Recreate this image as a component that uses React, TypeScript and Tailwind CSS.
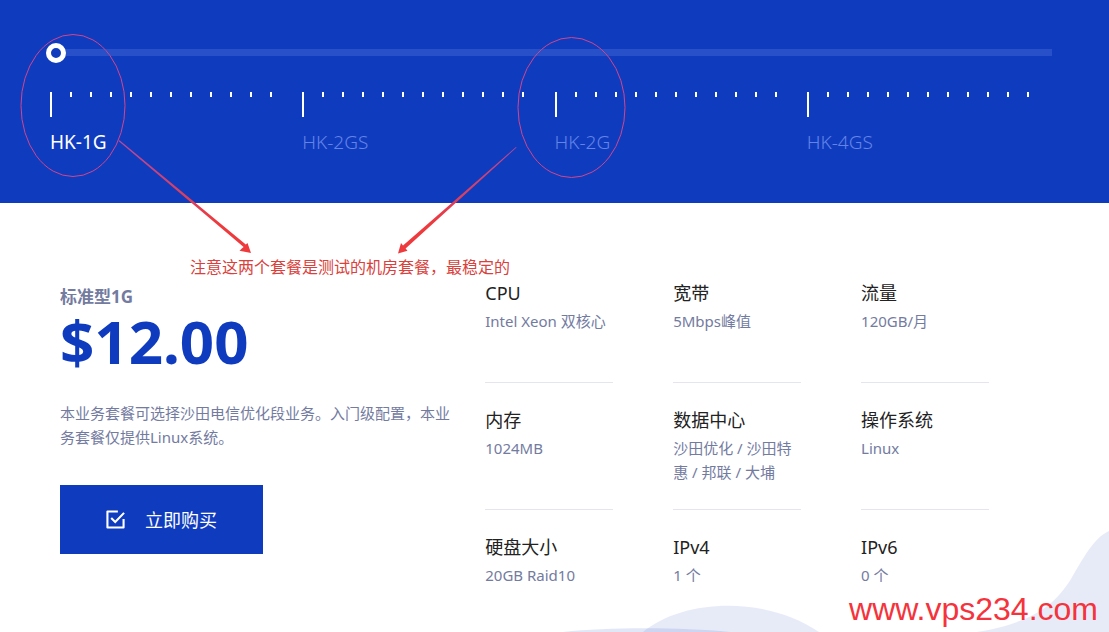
import { useState } from "react";

const plans = ["HK-1G", "HK-2GS", "HK-2G", "HK-4GS"];

const specs = [
  { title: "CPU", value: "Intel Xeon 双核心" },
  { title: "宽带", value: "5Mbps峰值" },
  { title: "流量", value: "120GB/月" },
  { title: "内存", value: "1024MB" },
  { title: "数据中心", value: "沙田优化 / 沙田特惠 / 邦联 / 大埔" },
  { title: "操作系统", value: "Linux" },
  { title: "硬盘大小", value: "20GB Raid10" },
  { title: "IPv4", value: "1 个" },
  { title: "IPv6", value: "0 个" },
];

function PlanSlider() {
  const [plan, setPlan] = useState(0);

  return (
    <header className="bg-[#0f3cbf] h-[203px] pt-[42px]">
      <div className="pl-[46px] pr-[57px]">
        <input
          type="range"
          aria-label="套餐"
          min={0}
          max={3}
          value={plan}
          onChange={(e) => setPlan(Number(e.target.value))}
          className="block w-full h-5 appearance-none bg-transparent cursor-pointer focus:outline-none [&::-webkit-slider-runnable-track]:h-[7px] [&::-webkit-slider-runnable-track]:bg-[#2850c8] [&::-webkit-slider-thumb]:appearance-none [&::-webkit-slider-thumb]:w-5 [&::-webkit-slider-thumb]:h-5 [&::-webkit-slider-thumb]:-mt-[6px] [&::-webkit-slider-thumb]:rounded-full [&::-webkit-slider-thumb]:border-5 [&::-webkit-slider-thumb]:border-white [&::-webkit-slider-thumb]:bg-[#0f3cbf]"
        />
      </div>
      <div className="grid grid-cols-4 px-[50px] mt-[30px]">
        {plans.map((name, i) => (
          <div key={name}>
            <div className="flex gap-[18px]">
              <span className="w-[2px] h-[25px] bg-white" />
              {Array.from({ length: 11 }, (_, n) => (
                <span key={n} className="w-[2px] h-[5px] bg-white" />
              ))}
            </div>
            <button
              type="button"
              onClick={() => setPlan(i)}
              className={
                i === plan
                  ? "block mt-[11px] text-[19px] leading-7 text-white"
                  : "block mt-[11px] text-[19px] leading-7 font-light text-[#6483e6]"
              }
            >
              {name}
            </button>
          </div>
        ))}
      </div>
    </header>
  );
}

function Offer() {
  return (
    <div className="pt-2 pr-[35px]">
      <h2 className="text-[17px] leading-6 font-bold text-[#737b9f]">标准型1G</h2>
      <p className="text-[60px] leading-16 font-bold text-[#0f3cbf]">$12.00</p>
      <p className="mt-7 text-[15px] leading-6 text-[#737b9f]">
        本业务套餐可选择沙田电信优化段业务。入门级配置，本业务套餐仅提供Linux系统。
      </p>
      <button
        type="button"
        className="flex items-center gap-5 mt-9 h-[69px] px-[46px] bg-[#0f3cbf] text-white text-lg leading-8"
      >
        <svg className="w-[19px] h-[19px]" viewBox="0 0 20 20" fill="none" stroke="currentColor" strokeWidth="2.2">
          <path d="M12.5 1.5H1.5v17h17v-9" strokeLinejoin="round" />
          <path d="M5.5 8.5l4.2 4.2L19 3" />
        </svg>
        立即购买
      </button>
    </div>
  );
}

function SpecGrid() {
  return (
    <dl className="grid grid-cols-3 gap-y-[21px]">
      {specs.map((spec) => (
        <div key={spec.title} className="group pr-[60px]">
          <dt className="text-lg leading-8 text-[#222]">{spec.title}</dt>
          <dd className="text-[15px] leading-6 text-[#737b9f] min-h-[73px] group-nth-[n+7]:min-h-0">
            {spec.value}
          </dd>
          <div className="h-px bg-[#e4e6ec] group-nth-[n+7]:hidden" />
        </div>
      ))}
    </dl>
  );
}

function Waves() {
  return (
    <svg className="absolute right-0 bottom-0 w-[560px] h-[110px]" viewBox="0 0 560 110" fill="#0f3cbf">
      <path d="M94 110C135 76 218 74 270 110z" opacity="0.1" />
      <path d="M14 110C60 105 130 105 181 110z" opacity="0.12" />
      <path d="M428 110C480 101 504 86 522 57C538 29 547 15 560 9V110z" opacity="0.1" />
    </svg>
  );
}

// hand-drawn notes over the plan picker
function Notes() {
  return (
    <div className="absolute top-0 left-0 pointer-events-none">
      <svg className="w-[640px] h-[255px]" viewBox="0 0 640 255" fill="none">
        <defs>
          <linearGradient id="arrow" gradientUnits="userSpaceOnUse" x1="0" y1="140" x2="0" y2="225">
            <stop offset="0" stopColor="#b8489e" />
            <stop offset="1" stopColor="#ee3a3c" />
          </linearGradient>
        </defs>
        <g stroke="#d2458b" strokeWidth="1">
          <ellipse cx="73" cy="105.5" rx="52" ry="71" />
          <ellipse cx="571.5" cy="107.5" rx="53.5" ry="70" />
        </g>
        <g fill="url(#arrow)">
          <path d="M118.5 141L119.5 140.3L245.8 244.4L247.5 243L251 253L239.5 250.8L241.8 248.4L243.6 247z" />
          <path d="M516 147L516.5 147.6L405.6 248.6L407.5 250.8L398 253.5L401 243L403 245.6z" />
        </g>
      </svg>
      <p className="pl-[190px] text-base leading-6 text-[#d9413c]">
        注意这两个套餐是测试的机房套餐，最稳定的
      </p>
    </div>
  );
}

export default function App() {
  return (
    <div className="relative min-h-screen overflow-hidden bg-white font-['Noto_Sans','Noto_Sans_CJK_SC',sans-serif]">
      <Waves />
      <PlanSlider />
      <main className="relative grid grid-cols-[43%_1fr] px-[60px] pt-[74px] pb-6">
        <Offer />
        <SpecGrid />
      </main>
      <Notes />
      <p className="absolute right-[11px] bottom-[5px] font-['Liberation_Sans',sans-serif] text-[32px] leading-9 text-[#f5333c]">
        www.vps234.com
      </p>
    </div>
  );
}
